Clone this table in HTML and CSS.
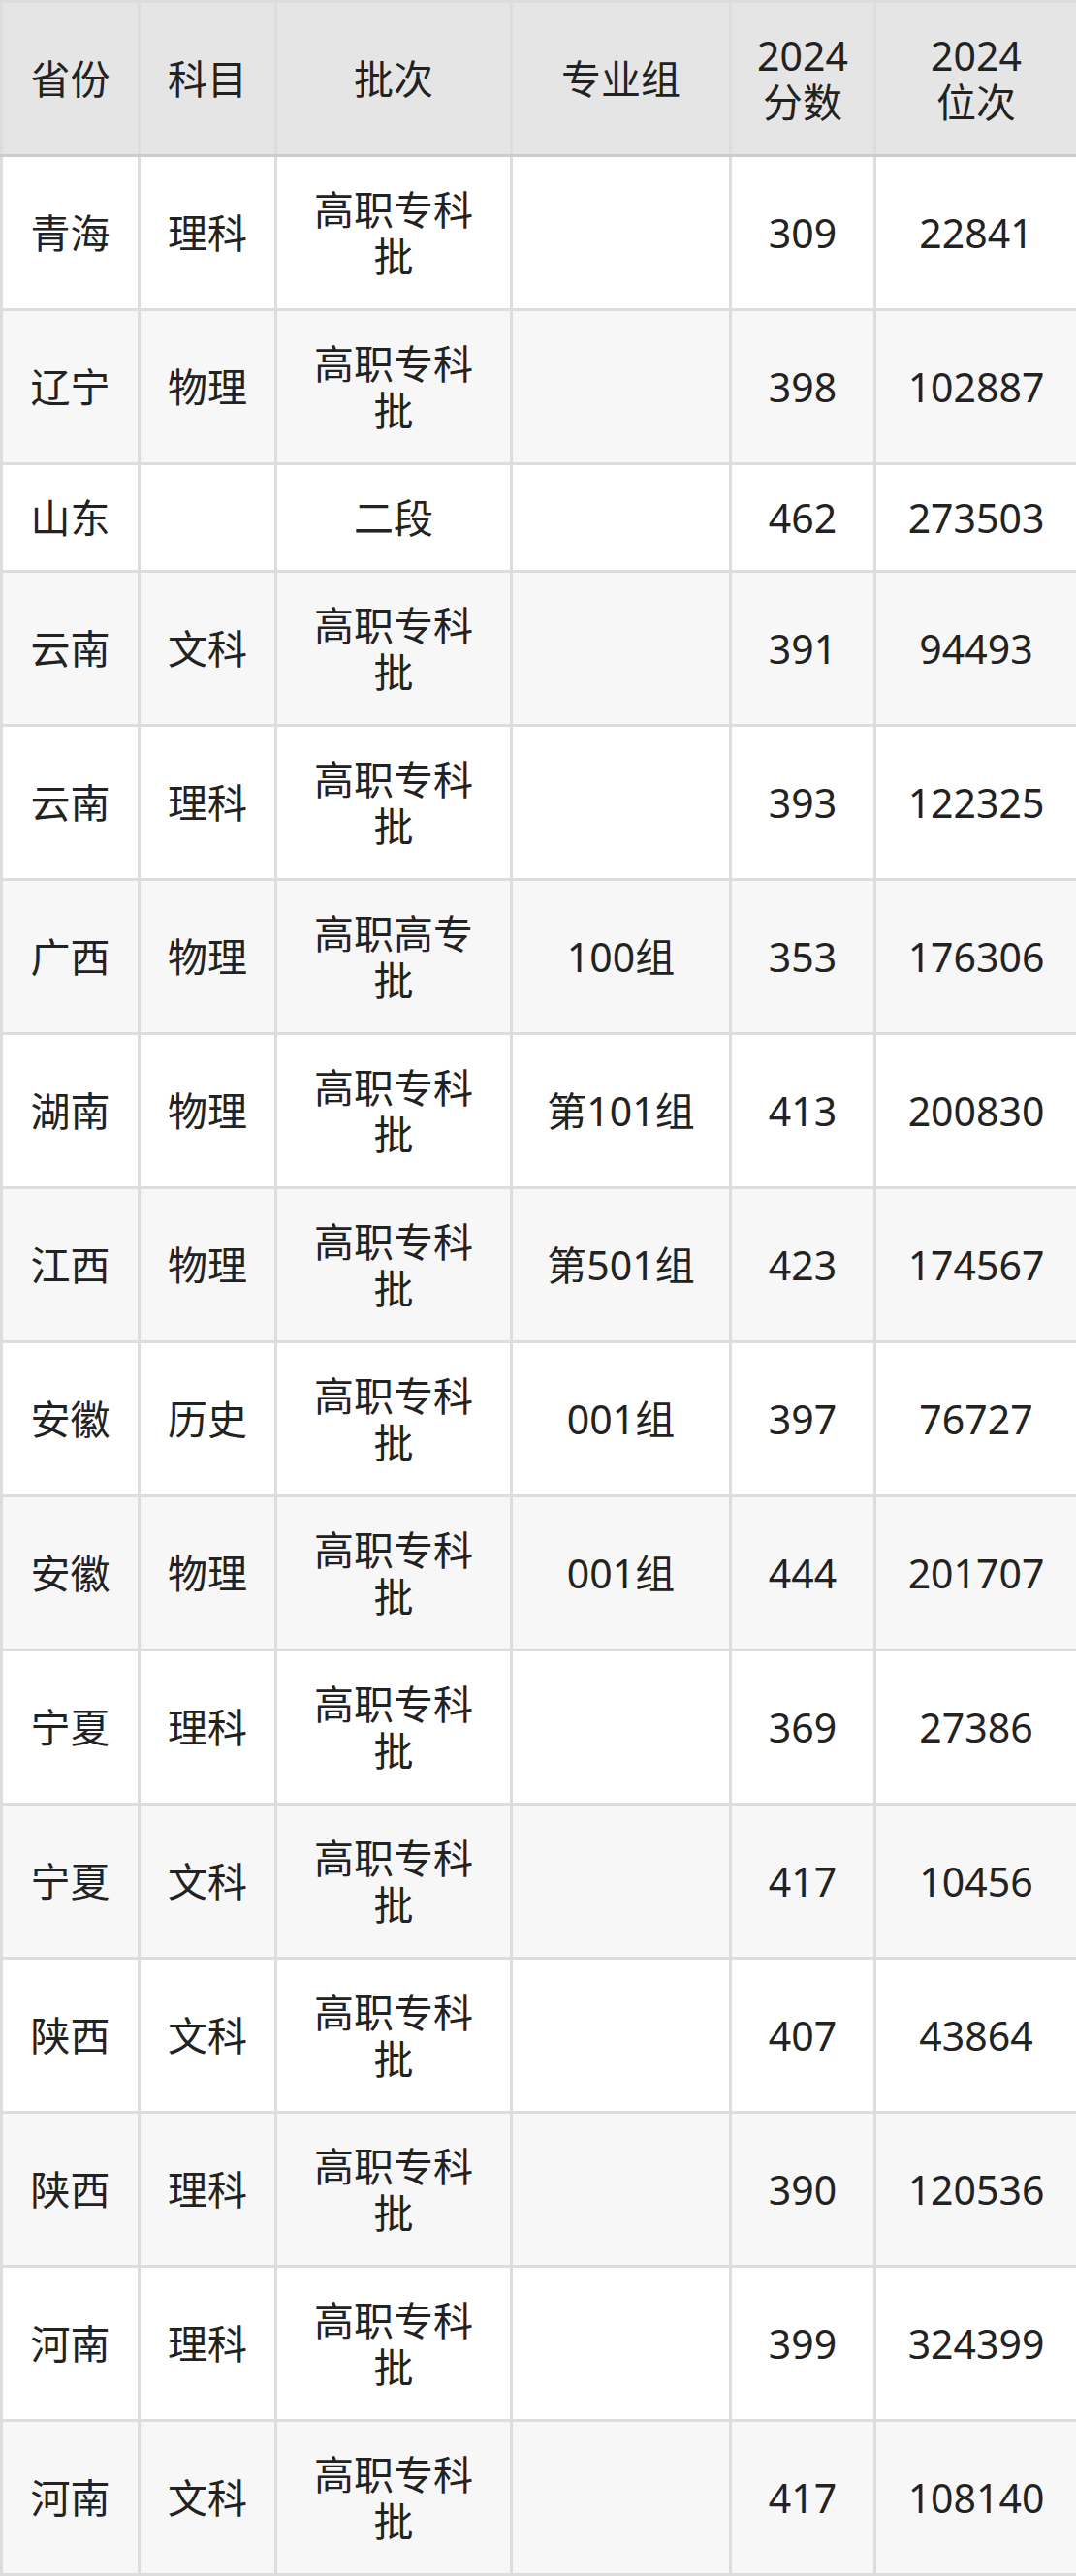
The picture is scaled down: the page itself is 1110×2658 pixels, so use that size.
FILE: index.html
```html
<!DOCTYPE html>
<html lang="zh-CN">
<head>
<meta charset="utf-8">
<title>2024 分数位次</title>
<link rel="stylesheet" href="styles.css">
</head>
<body>
<table class="score-table">
  <colgroup>
    <col class="c-prov">
    <col class="c-subj">
    <col class="c-batch">
    <col class="c-group">
    <col class="c-score">
    <col class="c-rank">
  </colgroup>
  <thead>
    <tr>
      <th>省份</th>
      <th>科目</th>
      <th>批次</th>
      <th>专业组</th>
      <th>2024<br>分数</th>
      <th>2024<br>位次</th>
    </tr>
  </thead>
  <tbody>
    <tr><td>青海</td><td>理科</td><td class="batch">高职专科批</td><td></td><td>309</td><td>22841</td></tr>
    <tr><td>辽宁</td><td>物理</td><td class="batch">高职专科批</td><td></td><td>398</td><td>102887</td></tr>
    <tr><td>山东</td><td></td><td class="batch">二段</td><td></td><td>462</td><td>273503</td></tr>
    <tr><td>云南</td><td>文科</td><td class="batch">高职专科批</td><td></td><td>391</td><td>94493</td></tr>
    <tr><td>云南</td><td>理科</td><td class="batch">高职专科批</td><td></td><td>393</td><td>122325</td></tr>
    <tr><td>广西</td><td>物理</td><td class="batch">高职高专批</td><td>100组</td><td>353</td><td>176306</td></tr>
    <tr><td>湖南</td><td>物理</td><td class="batch">高职专科批</td><td>第101组</td><td>413</td><td>200830</td></tr>
    <tr><td>江西</td><td>物理</td><td class="batch">高职专科批</td><td>第501组</td><td>423</td><td>174567</td></tr>
    <tr><td>安徽</td><td>历史</td><td class="batch">高职专科批</td><td>001组</td><td>397</td><td>76727</td></tr>
    <tr><td>安徽</td><td>物理</td><td class="batch">高职专科批</td><td>001组</td><td>444</td><td>201707</td></tr>
    <tr><td>宁夏</td><td>理科</td><td class="batch">高职专科批</td><td></td><td>369</td><td>27386</td></tr>
    <tr><td>宁夏</td><td>文科</td><td class="batch">高职专科批</td><td></td><td>417</td><td>10456</td></tr>
    <tr><td>陕西</td><td>文科</td><td class="batch">高职专科批</td><td></td><td>407</td><td>43864</td></tr>
    <tr><td>陕西</td><td>理科</td><td class="batch">高职专科批</td><td></td><td>390</td><td>120536</td></tr>
    <tr><td>河南</td><td>理科</td><td class="batch">高职专科批</td><td></td><td>399</td><td>324399</td></tr>
    <tr><td>河南</td><td>文科</td><td class="batch">高职专科批</td><td></td><td>417</td><td>108140</td></tr>
  </tbody>
</table>
</body>
</html>
```

FILE: styles.css
```css
html, body {
  margin: 0;
  padding: 0;
  background: #ffffff;
}

.score-table {
  width: 1110px;
  table-layout: fixed;
  border-collapse: collapse;
  border: 3px solid #dcdcdc;
  font-family: "Noto Sans", "Noto Sans CJK SC", sans-serif;
  font-size: 41px;
  line-height: 48px;
  color: #222222;
}

.c-prov { width: 142px; }
.c-subj { width: 141px; }
.c-batch { width: 243px; }
.c-group { width: 226px; }
.c-score { width: 149px; }
.c-rank { width: 209px; }

.score-table th,
.score-table td {
  border: 3px solid #dddddd;
  padding: 30px 4px;
  text-align: center;
  vertical-align: middle;
  font-weight: normal;
}

.score-table th {
  background: #e5e5e5;
  border-bottom-color: #cccccc;
}

.score-table td.batch {
  padding-left: 38px;
  padding-right: 38px;
}

.score-table tbody tr:nth-child(even) td {
  background: #f7f7f7;
}
```
